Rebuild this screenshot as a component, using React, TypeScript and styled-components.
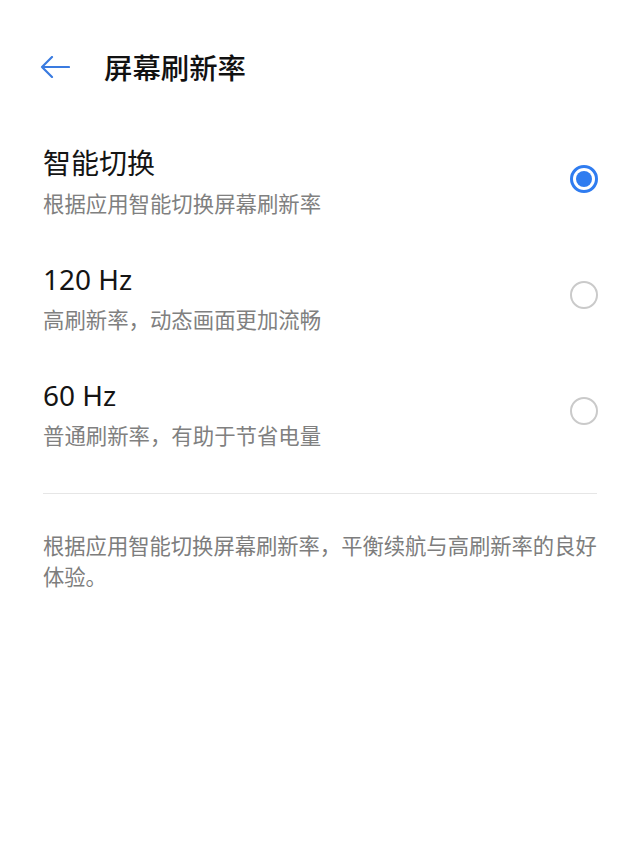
import React from "react";
import styled, { createGlobalStyle } from "styled-components";

const Global = createGlobalStyle`
  html, body { margin: 0; padding: 0; background: #ffffff; }
  body { font-family: "Noto Sans", "Noto Sans CJK SC", sans-serif; }
`;

const Page = styled.div`
  width: 640px;
  min-height: 867px;
  background: #ffffff;
  display: flex;
  flex-direction: column;
`;

const Header = styled.header`
  display: flex;
  align-items: center;
  gap: 34px;
  height: 42px;
  padding: 46px 40px 0;
`;

const BackButton = styled.button`
  border: 0;
  background: none;
  padding: 0;
  width: 30px;
  height: 22px;
  display: flex;
  align-items: center;
  cursor: pointer;
`;

const Title = styled.h1`
  margin: 0;
  font-size: 28.4px;
  line-height: 42px;
  font-weight: 500;
  color: #111111;
  font-family: "Noto Sans CJK SC", sans-serif;
`;

const List = styled.div`
  margin-top: 35px;
  padding: 0 43px;
  display: flex;
  flex-direction: column;
`;

const Row = styled.div`
  display: flex;
  align-items: center;
  justify-content: space-between;
  padding: 22px 0;
`;

const TextCol = styled.div`
  display: flex;
  flex-direction: column;
  gap: 8px;
`;

const OptionTitle = styled.div`
  font-size: 28px;
  line-height: 36px;
  color: #141414;
  font-weight: 400;
`;

const OptionSub = styled.div`
  font-size: 21.4px;
  line-height: 28px;
  color: #808080;
  font-family: "Noto Sans CJK SC", sans-serif;
`;

const Radio = styled.div<{ $checked: boolean }>`
  width: 28px;
  height: 28px;
  box-sizing: border-box;
  border-radius: 50%;
  border: ${(p) => (p.$checked ? "3px solid #2f7cf0" : "2px solid #cacaca")};
  margin-bottom: 4px;
  margin-right: -1px;
  display: flex;
  align-items: center;
  justify-content: center;
  &::after {
    content: "";
    display: ${(p) => (p.$checked ? "block" : "none")};
    width: 16px;
    height: 16px;
    border-radius: 50%;
    background: #2f7cf0;
  }
`;

const Divider = styled.div`
  margin: 22px 43px 0;
  height: 1px;
  background: #e6e6e6;
`;

const Footer = styled.p`
  margin: 35px 43px 0;
  font-size: 21.3px;
  line-height: 31px;
  color: #7d7d7d;
  font-family: "Noto Sans CJK SC", sans-serif;
`;

const options = [
  { title: "智能切换", sub: "根据应用智能切换屏幕刷新率", checked: true },
  { title: "120 Hz", sub: "高刷新率，动态画面更加流畅", checked: false },
  { title: "60 Hz", sub: "普通刷新率，有助于节省电量", checked: false },
];

export default function App() {
  return (
    <>
      <Global />
      <Page>
        <Header>
          <BackButton aria-label="返回">
            <svg width="30" height="22" viewBox="0 0 30 22" fill="none">
              <path
                d="M2 11H29M12 1L2 11L12 21"
                stroke="#3a7be0"
                strokeWidth="2.2"
                strokeLinecap="round"
                strokeLinejoin="round"
              />
            </svg>
          </BackButton>
          <Title>屏幕刷新率</Title>
        </Header>
        <List>
          {options.map((o) => (
            <Row key={o.title}>
              <TextCol>
                <OptionTitle>{o.title}</OptionTitle>
                <OptionSub>{o.sub}</OptionSub>
              </TextCol>
              <Radio $checked={o.checked} />
            </Row>
          ))}
        </List>
        <Divider />
        <Footer>根据应用智能切换屏幕刷新率，平衡续航与高刷新率的良好体验。</Footer>
      </Page>
    </>
  );
}
